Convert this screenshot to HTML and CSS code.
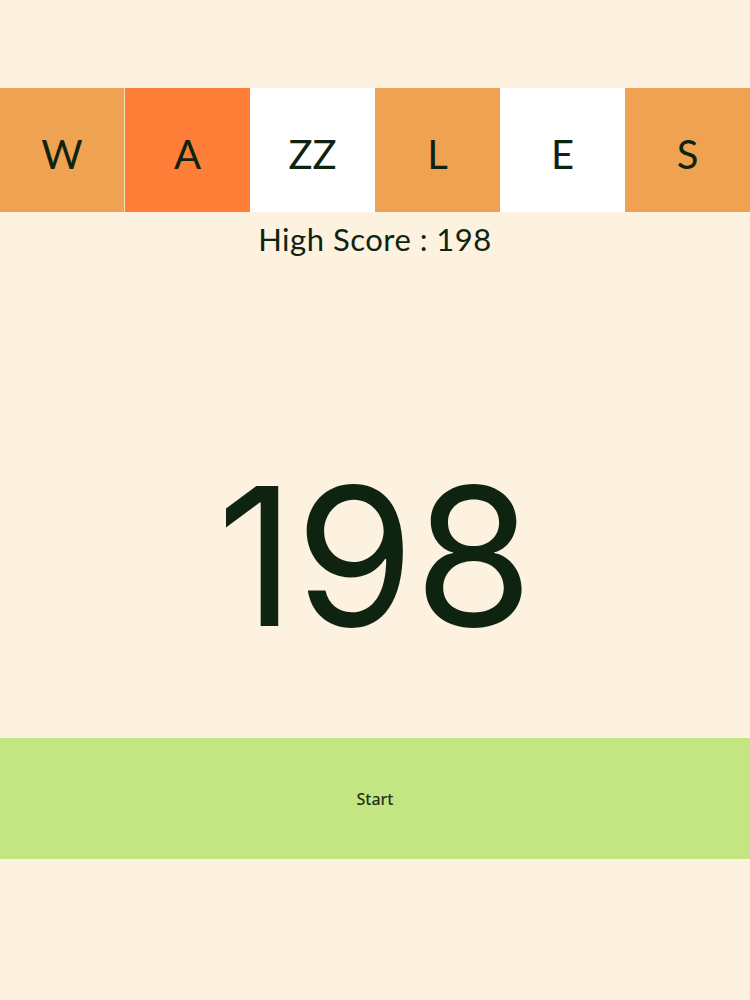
FILE: index.html
```html
<!DOCTYPE html>
<html>
<head>
<meta charset="utf-8">
<link rel="stylesheet" href="styles.css">
</head>
<body>
<div class="page">
  <div class="tiles">
    <div class="tile light sep">W</div>
    <div class="tile dark">A</div>
    <div class="tile white">ZZ</div>
    <div class="tile light">L</div>
    <div class="tile white">E</div>
    <div class="tile light">S</div>
  </div>
  <div class="high">High Score : 198</div>
  <div class="score">198</div>
  <div class="start">Start</div>
</div>
</body>
</html>
```
FILE: styles.css
```css
html, body {
  margin: 0;
  padding: 0;
  background: #fdf1df;
}
.page {
  width: 750px;
  height: 1000px;
  display: flex;
  flex-direction: column;
  font-family: Lato, "Noto Sans", sans-serif;
  color: #0f2410;
}
.tiles {
  margin-top: 88px;
  display: flex;
  height: 124px;
}
.tile {
  width: 125px;
  display: flex;
  align-items: center;
  justify-content: center;
  font-size: 40px;
  padding-top: 8px;
  box-sizing: border-box;
}
.sep { border-right: 1px solid #f8dcb6; }
.light { background: #f0a253; }
.dark { background: #ff7f38; }
.white { background: #ffffff; }
.high {
  text-align: center;
  font-size: 31px;
  letter-spacing: 0.5px;
  height: 56px;
  line-height: 54px;
}
.score {
  height: 470px;
  display: flex;
  align-items: center;
  justify-content: center;
  font-family: Inter, sans-serif;
  font-size: 192px;
  letter-spacing: 0px;
  padding-top: 106px;
  box-sizing: border-box;
}
.start {
  height: 121px;
  background: #c4e682;
  display: flex;
  align-items: center;
  justify-content: center;
  font-size: 16px;
  font-weight: 500;
  font-family: "Noto Sans", sans-serif;
  color: #1d3417;
}
```
